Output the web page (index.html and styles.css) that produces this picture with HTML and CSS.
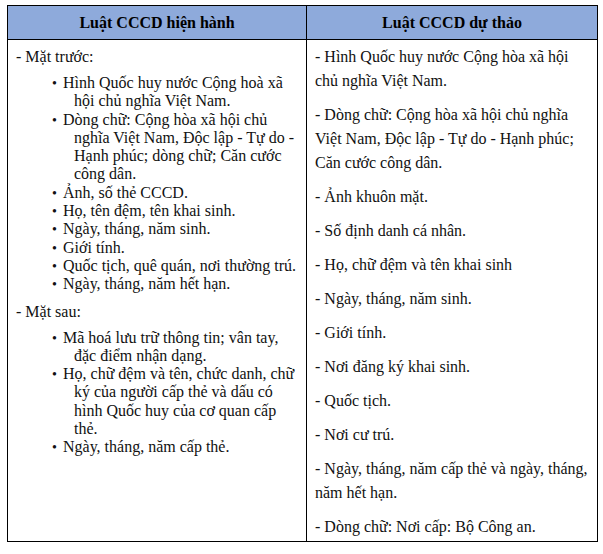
FILE: index.html
```html
<!DOCTYPE html>
<html lang="vi">
<head>
<meta charset="utf-8">
<title>So sánh Luật CCCD</title>
<link rel="stylesheet" href="styles.css">
</head>
<body>
<div class="page">
  <table class="compare">
    <colgroup>
      <col class="col-left">
      <col class="col-right">
    </colgroup>
    <thead>
      <tr>
        <th>Luật CCCD hiện hành</th>
        <th>Luật CCCD dự thảo</th>
      </tr>
    </thead>
    <tbody>
      <tr>
        <td class="cell-left">
          <p class="group">- Mặt trước:</p>
          <ul class="bullets">
            <li>Hình Quốc huy nước Cộng hoà xã hội chủ nghĩa Việt Nam.</li>
            <li>Dòng chữ: Cộng hòa xã hội chủ nghĩa Việt Nam, Độc lập - Tự do - Hạnh phúc; dòng chữ; Căn cước công dân.</li>
            <li>Ảnh, số thẻ CCCD.</li>
            <li>Họ, tên đệm, tên khai sinh.</li>
            <li>Ngày, tháng, năm sinh.</li>
            <li>Giới tính.</li>
            <li>Quốc tịch, quê quán, nơi thường trú.</li>
            <li>Ngày, tháng, năm hết hạn.</li>
          </ul>
          <p class="group">- Mặt sau:</p>
          <ul class="bullets">
            <li>Mã hoá lưu trữ thông tin; vân tay, đặc điểm nhận dạng.</li>
            <li>Họ, chữ đệm và tên, chức danh, chữ ký của người cấp thẻ và dấu có hình Quốc huy của cơ quan cấp thẻ.</li>
            <li>Ngày, tháng, năm cấp thẻ.</li>
          </ul>
        </td>
        <td class="cell-right">
          <p>- Hình Quốc huy nước Cộng hòa xã hội chủ nghĩa Việt Nam.</p>
          <p>- Dòng chữ: Cộng hòa xã hội chủ nghĩa Việt Nam, Độc lập - Tự do - Hạnh phúc; Căn cước công dân.</p>
          <p>- Ảnh khuôn mặt.</p>
          <p>- Số định danh cá nhân.</p>
          <p>- Họ, chữ đệm và tên khai sinh</p>
          <p>- Ngày, tháng, năm sinh.</p>
          <p>- Giới tính.</p>
          <p>- Nơi đăng ký khai sinh.</p>
          <p>- Quốc tịch.</p>
          <p>- Nơi cư trú.</p>
          <p>- Ngày, tháng, năm cấp thẻ và ngày, tháng, năm hết hạn.</p>
          <p>- Dòng chữ: Nơi cấp: Bộ Công an.</p>
        </td>
      </tr>
    </tbody>
  </table>
</div>
</body>
</html>
```

FILE: styles.css
```css
html, body {
  margin: 0;
  padding: 0;
  background: #ffffff;
}

.page {
  padding: 5px 7px;
  font-family: "Liberation Serif", "Times New Roman", serif;
  font-size: 16px;
  color: #111;
}

.compare {
  border-collapse: collapse;
  table-layout: fixed;
  width: 590px;
  font-family: "Liberation Serif", "Times New Roman", serif;
  font-size: 16px;
}

.col-left { width: 299px; }
.col-right { width: 291px; }

.compare th {
  background: #8eaadb;
  border: 1px solid #000;
  height: 33px;
  padding: 0 8px;
  font-weight: bold;
  color: #000;
  text-align: center;
  vertical-align: middle;
}

.compare td {
  border: 1px solid #000;
  vertical-align: top;
  padding: 5px 8px 2px 8px;
}

.cell-left .group {
  margin: 0 0 5px 0;
  line-height: 24px;
}

.bullets {
  list-style: none;
  margin: 0 0 6px 0;
  padding: 0 0 0 58px;
  line-height: 18.3px;
}

.bullets li {
  text-indent: -22px;
}

.bullets li::before {
  content: "•";
  display: inline-block;
  width: 11px;
  text-indent: 0;
  font-size: 14px;
  line-height: 0;
}

.cell-right p {
  margin: 0 0 10px 0;
  line-height: 24px;
}

.cell-right p:last-child {
  margin-bottom: 0;
}
```
